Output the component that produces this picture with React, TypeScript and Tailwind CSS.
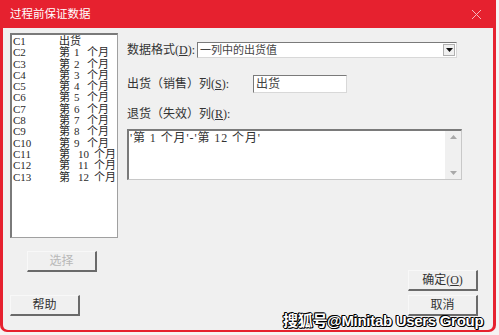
import React from 'react';

const cols: [string, string | null][] = [
  ['C1', null],
  ['C2', '1'],
  ['C3', '2'],
  ['C4', '3'],
  ['C5', '4'],
  ['C6', '5'],
  ['C7', '6'],
  ['C8', '7'],
  ['C9', '8'],
  ['C10', '9'],
  ['C11', '10'],
  ['C12', '11'],
  ['C13', '12'],
];

const font = "font-['SimSun','Liberation_Serif','Noto_Sans_CJK_SC',serif]";

const Btn = ({ children, disabled, className = '' }: { children: React.ReactNode; disabled?: boolean; className?: string }) => (
  <button
    className={`h-[21px] w-[70px] bg-[#f0f0f0] border-t border-l border-t-[#f8f8f8] border-l-[#f8f8f8] border-r-2 border-b-2 border-r-[#6a6a6a] border-b-[#6a6a6a] text-[12px] ${
      disabled ? 'text-[#b8b8b8]' : 'text-[#333]'
    } ${className}`}
  >
    {children}
  </button>
);

const App = () => {
  return (
    <div className={`w-[499px] h-[335px] bg-[#f6f4f4] relative overflow-hidden ${font}`}>
      <div className="w-[496px] h-[332px] flex flex-col bg-[#e6212f] rounded-b-[7px] px-[3px] pb-[2px]">
        <div className="h-[28px] flex items-center justify-between pl-[7px] pr-[10px] text-white">
          <span className="text-[11.5px] font-['Noto_Sans_CJK_SC',sans-serif]">过程前保证数据</span>
          <svg width="11" height="11" viewBox="0 0 11 11" className="mr-[1px]">
            <path d="M1 1 L10 10 M10 1 L1 10" stroke="#f4b8bd" strokeWidth="1" />
          </svg>
        </div>
        <div className="flex-1 bg-[#f0f0f0] rounded-b-[5px] flex pl-[7px] pt-[5px] pb-[14px] pr-[15px] text-[#333] text-[12px]">
          <div className="w-[108px] flex flex-col">
            <div className="h-[205px] bg-white border-t-2 border-l-2 border-t-[#7a7a7a] border-l-[#7a7a7a] border-r border-b border-r-[#a0a0a0] border-b-[#a0a0a0] pl-[1px] pt-[1px] text-[11px] leading-[11.3px] text-[#2a2a2a]">
              {cols.map(([c, n]) => (
                <div key={c} className="flex whitespace-nowrap">
                  <span className="w-[46px]">{c}</span>
                  {n === null ? (
                    <span>出货</span>
                  ) : (
                    <>
                      <span className="w-[11px]">第</span>
                      <span className={n.length > 1 ? 'w-[24px] pl-[8px]' : 'w-[17px] pl-[4px]'}>{n}</span>
                      <span>个月</span>
                    </>
                  )}
                </div>
              ))}
            </div>
            <Btn disabled className="mt-[13px] ml-[17px]">选择</Btn>
            <Btn className="mt-auto">帮助</Btn>
          </div>
          <div className="flex-1 ml-[9px] flex flex-col">
            <div className="flex items-center mt-[9px] h-[16px]">
              <span className="w-[70px] whitespace-nowrap">数据格式(<u>D</u>):</span>
              <div className="w-[260px] h-[16px] bg-white border-t border-l border-t-[#7a7a7a] border-l-[#7a7a7a] border-r border-b border-r-[#d8d8d8] border-b-[#d8d8d8] flex items-center justify-between pl-[2px] pr-[1px]">
                <span className="text-[11px] text-[#444]">一列中的出货值</span>
                <div className="w-[12px] h-[12px] bg-[#f0f0f0] border border-[#b0b0b0] flex items-center justify-center">
                  <svg width="7" height="4" viewBox="0 0 7 4"><path d="M0 0 H7 L3.5 4 Z" fill="#111" /></svg>
                </div>
              </div>
            </div>
            <div className="flex items-center mt-[17px] h-[18px]">
              <span className="w-[126px] whitespace-nowrap">出货（销售）列(<u>S</u>):</span>
              <div className="w-[94px] h-[18px] bg-white border-t border-l border-t-[#7a7a7a] border-l-[#7a7a7a] border-r border-b border-r-[#d8d8d8] border-b-[#d8d8d8] pl-[2px] leading-[16px] text-[#444]">
                出货
              </div>
            </div>
            <div className="mt-[12px]">退货（失效）列(<u>R</u>):</div>
            <div className="mt-[6px] w-[335px] h-[51px] bg-white border-t-2 border-l-2 border-t-[#7a7a7a] border-l-[#7a7a7a] border-r border-b border-r-[#c8c8c8] border-b-[#c8c8c8] flex">
              <div className="flex-1 pl-[1px] pt-[1px] leading-[13px] whitespace-pre text-[#333] tracking-[0.9px]">'第 1 个月'-'第 12 个月'</div>
              <div className="w-[16px] bg-[#f0f0f0] flex flex-col items-center justify-between py-[4px]">
                <svg width="7" height="4" viewBox="0 0 7 4"><path d="M0 4 H7 L3.5 0 Z" fill="#a8a8a8" /></svg>
                <svg width="7" height="4" viewBox="0 0 7 4"><path d="M0 0 H7 L3.5 4 Z" fill="#a8a8a8" /></svg>
              </div>
            </div>
            <div className="mt-auto flex flex-col items-end gap-[4px]">
              <Btn>确定(<u>O</u>)</Btn>
              <Btn>取消</Btn>
            </div>
          </div>
        </div>
      </div>
      <div className="absolute left-[283px] top-[310px] whitespace-nowrap text-white text-[15px] font-bold tracking-[-0.3px] font-['Liberation_Sans','Noto_Sans_CJK_SC',sans-serif] [text-shadow:-1px_0_#000,1px_0_#000,0_1px_#000,0_-1px_#000,1px_1px_#000,-1px_-1px_#000]">
        搜狐号@Minitab Users Group
      </div>
    </div>
  );
};

export default App;
